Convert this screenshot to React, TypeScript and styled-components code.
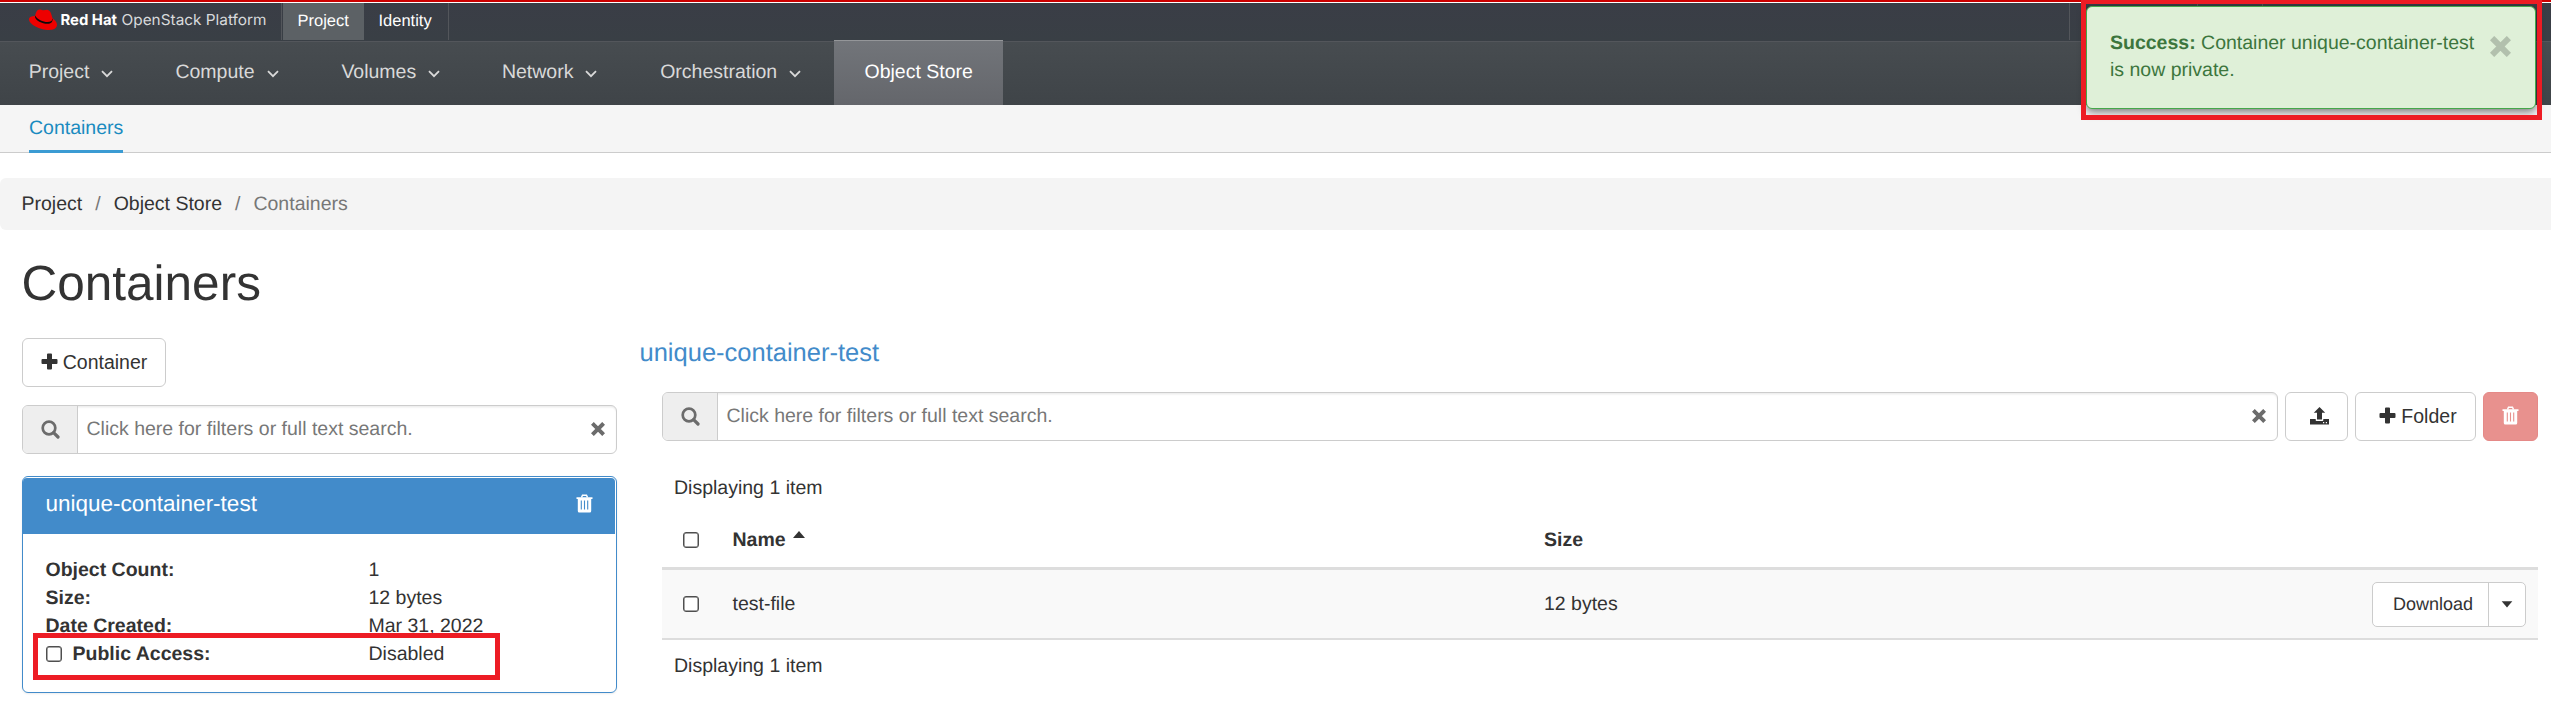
import React from 'react';
import styled, { createGlobalStyle, css } from 'styled-components';

const GlobalStyle = createGlobalStyle`
  * { box-sizing: border-box; }
  html, body { margin: 0; padding: 0; background: #fff; }
  body {
    font-family: "Liberation Sans", Arial, sans-serif;
    font-size: 19.5px;
    line-height: 28px;
    color: #333;
    text-rendering: geometricPrecision;
    overflow: hidden;
  }
`;

const Page = styled.div`
  position: relative;
  width: 2551px;
  height: 704px;
  overflow: hidden;
`;

/* ---------- header ---------- */
const TopBar = styled.header`
  display: flex;
  height: 42px;
  border-top: 2px solid #c00;
  border-bottom: 1px solid #53565b;
  padding-top: 1px;
  background: linear-gradient(#fff 1px, #3a3d46 1px, #393f45);
  font-size: 16.5px;
  line-height: 37px;
  color: #fff;
`;
const Brand = styled.div`
  display: flex;
  align-items: flex-start;
  width: 282px;
  height: 37px;
  padding: 6px 0 0 29px;
  border-right: 1px solid #53565b;
  svg { display: block; }
`;
const TopLink = styled.a<{ $active?: boolean; $w: number }>`
  height: 37px;
  width: ${p => p.$w}px;
  padding-left: 14.5px;
  ${p => p.$active
    ? css`margin-left: 1px; background: #5c6165;`
    : css`border-right: 1px solid #53565b;`}
`;
const UserArea = styled.div`
  display: flex;
  height: 37px;
  width: 482px;
  margin-left: auto;
  border-left: 1px solid #53565b;
`;
const UserCell = styled.div<{ $w: number }>`
  width: ${p => p.$w}px;
  border-right: 1px solid #53565b;
`;

const MainNav = styled.nav`
  display: flex;
  height: 63px;
  background: linear-gradient(#474c50, #3f4448);
  color: #d9d9d9;
`;
const NavItem = styled.a<{ $w: number }>`
  display: flex;
  align-items: flex-start;
  gap: 12px;
  width: ${p => p.$w}px;
  padding: 16px 0 0 28.7px;
  svg { margin-top: 12px; }
`;
const NavActive = styled.a`
  position: relative;
  height: 65px;
  width: 169px;
  margin-top: -2px;
  padding: 17px 0 0 30.5px;
  border-top: 1px solid #949699;
  background: linear-gradient(#72757a, #64666b);
  color: #fff;
`;
const SubNav = styled.nav`
  display: flex;
  height: 48px;
  padding-left: 29px;
  background: #f5f5f5;
  border-bottom: 1px solid #ccc;
`;
const SubTab = styled.a`
  height: 48px;
  width: 94px;
  padding-top: 9px;
  border-bottom: 3px solid #3b9bd3;
  color: #1a8bc0;
`;

/* ---------- body ---------- */
const Crumbs = styled.div`
  display: flex;
  height: 52px;
  margin-top: 25px;
  padding: 12px 0 0 21.5px;
  border-radius: 6px 0 0 6px;
  background: #f4f4f4;
  color: #777;
  b { font-weight: normal; color: #333; }
  i { font-style: normal; padding: 0 13px; }
`;
const Title = styled.h1`
  margin: 27px 0 0 21.5px;
  height: 54px;
  line-height: 54px;
  font-size: 49.5px;
  font-weight: normal;
`;
const Columns = styled.main`
  display: flex;
  padding: 27px 13px 0 22px;
`;
const Left = styled.aside`
  width: 595px;
  flex: none;
`;
const Right = styled.section`
  flex: 1;
  padding-left: 23px;
`;

const Button = styled.button<{ $w: number; $danger?: boolean; $shift?: number }>`
  display: flex;
  align-items: center;
  justify-content: center;
  gap: 5px;
  width: ${p => p.$w}px;
  height: 49px;
  padding: 0 0 2px ${p => p.$shift ?? 0}px;
  flex: none;
  border: 1px solid ${p => (p.$danger ? '#e58987' : '#ccc')};
  border-radius: 6px;
  background: ${p => (p.$danger ? '#e8918e' : '#fff')};
  color: ${p => (p.$danger ? '#fff' : '#333')};
  font: inherit;
`;
const SearchBox = styled.div`
  display: flex;
  flex: 1;
  height: 49px;
  border: 1px solid #ccc;
  border-radius: 6px;
  overflow: hidden;
  background: #fff;
  box-shadow: inset 0 1.5px 1.5px rgba(0, 0, 0, 0.075);
  color: #777;
`;
const Addon = styled.span`
  display: flex;
  align-items: center;
  justify-content: center;
  width: 55px;
  background: #eee;
  border-right: 1px solid #ccc;
`;
const Placeholder = styled.span`
  flex: 1;
  padding: 9px 0 0 8.5px;
`;
const Clear = styled.span`
  padding: 16px 11px 0 0;
  line-height: 0;
`;
const LeftSearch = styled.div`
  display: flex;
  margin-top: 18px;
`;

const Card = styled.div`
  height: 217px;
  margin-top: 22px;
  padding: 1px 1px 0 0;
  border: 1px solid #428bca;
  border-radius: 6px;
  box-shadow: 0 1px 2px rgba(0, 0, 0, 0.08);
`;
const CardHead = styled.div`
  display: flex;
  justify-content: space-between;
  height: 56px;
  padding: 12px 22px 0 22.5px;
  border-radius: 4px 4px 0 0;
  background: #428bca;
  color: #fff;
  font-size: 22.5px;
  svg { margin-top: 4px; }
`;
const Details = styled.dl`
  display: grid;
  grid-template-columns: 323px 1fr;
  grid-auto-rows: 27.86px;
  margin: 0;
  padding: 22px 0 0 22.5px;
`;
const Term = styled.dt`
  display: flex;
  align-items: center;
  gap: 11px;
  font-weight: bold;
`;
const Value = styled.dd`
  margin: 0;
`;
const Check = styled.span`
  display: block;
  width: 16px;
  height: 16px;
  flex: none;
  border: 1px solid #4f4f4f;
  box-shadow: inset 0 0 0 0.5px #4f4f4f;
  border-radius: 3px;
  background: #fff;
`;

const Path = styled.a`
  display: block;
  height: 54px;
  margin-left: -0.5px;
  line-height: 30px;
  font-size: 25.5px;
  color: #428bca;
`;
const Toolbar = styled.div`
  display: flex;
  gap: 7px;
  margin-left: 22px;
`;
const TableWrap = styled.div`
  margin-left: 22px;
  padding-top: 33px;
`;
const Caption = styled.div`
  padding-left: 12px;
  height: 28px;
`;
const Row = styled.div<{ $head?: boolean }>`
  display: grid;
  grid-template-columns: 70.5px 811.5px 1fr auto;
  align-items: center;
  padding-right: 12px;
  ${p => p.$head
    ? css`height: 68px; font-weight: bold; border-bottom: 3px solid #ddd; padding-top: 10px;`
    : css`height: 70px; background: #f9f9f9; border-bottom: 2px solid #ddd;`}
`;
const CheckCell = styled.div`
  padding: 0 0 0 21px;
`;
const SortCell = styled.div`
  display: flex;
  gap: 7px;
  svg { margin-top: 5px; }
`;
const Split = styled.div`
  display: flex;
  width: 154px;
  height: 45px;
  border: 1px solid #ccc;
  border-radius: 5px;
  background: #fff;
  font-size: 18px;
`;
const SplitMain = styled.span`
  width: 116px;
  padding: 7px 0 0 20px;
  border-right: 1px solid #ccc;
`;
const SplitCaret = styled.span`
  flex: 1;
  display: flex;
  align-items: center;
  justify-content: center;
`;
const FootCaption = styled(Caption)`
  margin-top: 11.5px;
`;

/* ---------- overlays ---------- */
const Toast = styled.div`
  position: absolute;
  left: 2086px;
  top: 6px;
  width: 450px;
  height: 103px;
  padding: 22.5px 24px 0 23px;
  display: flex;
  justify-content: space-between;
  border: 1px solid #45a84a;
  border-radius: 6px;
  background: #dff0d8;
  box-shadow: 0 3px 9px rgba(0, 0, 0, 0.5);
  color: #3c763d;
  line-height: 27.4px;
  svg { margin-top: 6px; }
`;
const Highlight = styled.div<{ $x: number; $y: number; $w: number; $h: number }>`
  position: absolute;
  left: ${p => p.$x}px;
  top: ${p => p.$y}px;
  width: ${p => p.$w}px;
  height: ${p => p.$h}px;
  border: 5px solid #ed1c24;
`;

/* ---------- icons ---------- */
const Chevron = () => (
  <svg width="12" height="8" viewBox="0 0 12 8" fill="none" stroke="#d9d9d9" strokeWidth="1.8">
    <path d="M1 1.2 6 6.2 11 1.2" />
  </svg>
);
const Plus = () => (
  <svg width="17" height="17" viewBox="0 0 17 17">
    <path fill="currentColor" d="M7 .5h3a1 1 0 0 1 1 1V6h4.500a1 1 0 0 1 1 1v3a1 1 0 0 1-1 1H11v4.500a1 1 0 0 1-1 1H7a1 1 0 0 1-1-1V11H1.500a1 1 0 0 1-1-1V7a1 1 0 0 1 1-1H6V1.500a1 1 0 0 1 1-1z" />
  </svg>
);
const Cross = ({ size, color }: { size: number; color: string }) => (
  <svg width={size} height={size} viewBox="0 0 14 14">
    <path d="M2.800 2.800 11.200 11.200M11.200 2.800 2.800 11.200" stroke={color} strokeWidth="4" strokeLinecap="square" />
  </svg>
);
const Search = () => (
  <svg width="19" height="19" viewBox="0 0 19 19" fill="none" stroke="#6c6c6c">
    <circle cx="8" cy="8" r="6.300" strokeWidth="2.700" />
    <path d="M12.600 12.600 17 17" strokeWidth="3.200" strokeLinecap="round" />
  </svg>
);
const Trash = ({ inner }: { inner: string }) => (
  <svg width="17" height="19" viewBox="0 0 17 19">
    <path d="M5.500 3.500 6.500 1.300h4l1 2.200" fill="none" stroke="#fff" strokeWidth="1.500" />
    <path fill="#fff" d="M.5 3.300h16v1.700h-1.300V17a1.500 1.500 0 0 1-1.500 1.500H3.300A1.500 1.500 0 0 1 1.800 17V5H.5z" />
    <path d="M5.300 6.500v9M8.500 6.500v9M11.700 6.500v9" stroke={inner} strokeWidth="1.100" />
  </svg>
);
const Upload = () => (
  <svg width="19" height="18" viewBox="0 0 19 18" fill="#333">
    <path d="M9.500 0 15.200 5.800H12V12.500H7V5.800H3.800z" />
    <path d="M0 12h5.700v1.200q0 .8.800.8h6q.8 0 .8-.8V12H19v5.500H0z" />
    <path fill="#fff" d="M13 15h1.200v1.200H13zM15.800 15H17v1.200h-1.200z" />
  </svg>
);
const Caret = ({ up }: { up?: boolean }) => (
  <svg width="12" height="7" viewBox="0 0 12 7" fill="#333">
    <path d={up ? 'M0 7 6 0l6 7z' : 'M.7 .3h10.600L6 6.500z'} />
  </svg>
);
const Logo = () => (
  <svg width="240" height="24" viewBox="0 0 240 24">
    <path fill="#e00" d="M6 7C7 3.500 7.800.500 10.500.500c2 0 2.800.8 4.300.8s2.500-.8 4.200-.3c2.500.8 3.300 3.800 4.500 8.300 2.500 1.800 4.500 4.200 4.500 6.500 0 3.500-3.500 5.200-8 5.200C11 21 0 15.500 0 10.300 0 8 3 7 6 7z" />
    <path fill="#0b0b0b" d="M6.300 6.500C8 10.500 14 13 18.500 13c3 0 4.700-1 4.600-2.700l.4-.8c.5 3.500-1.500 5.300-5 5.300C13 14.800 6.500 11.500 6 8z" />
    <text x="31.500" y="16" fill="#fff" fontFamily="Inter, sans-serif" fontSize="15" fontWeight="700" textLength="56.500" lengthAdjust="spacingAndGlyphs">Red Hat</text>
    <text x="92.500" y="16" fill="#d8dadc" fontFamily="Inter, sans-serif" fontSize="15" fontWeight="400" textLength="145" lengthAdjust="spacingAndGlyphs">OpenStack Platform</text>
  </svg>
);

const SearchField = () => (
  <SearchBox>
    <Addon><Search /></Addon>
    <Placeholder>Click here for filters or full text search.</Placeholder>
    <Clear><Cross size={14} color="#6c6c6c" /></Clear>
  </SearchBox>
);

const menus: [string, number][] = [
  ['Project', 146.7], ['Compute', 166], ['Volumes', 160.5], ['Network', 158.3], ['Orchestration', 202.5],
];
const details = [['Object Count:', '1'], ['Size:', '12 bytes'], ['Date Created:', 'Mar 31, 2022']];

export default function App() {
  return (
    <>
      <GlobalStyle />
      <Page>
        <TopBar>
          <Brand><Logo /></Brand>
          <TopLink $active $w={81}>Project</TopLink>
          <TopLink $w={85}>Identity</TopLink>
          <UserArea>
            <UserCell $w={128} />
            <UserCell $w={65} />
          </UserArea>
        </TopBar>
        <MainNav>
          {menus.map(([name, w]) => (
            <NavItem key={name} $w={w}>{name}<Chevron /></NavItem>
          ))}
          <NavActive>Object Store</NavActive>
        </MainNav>
        <SubNav><SubTab>Containers</SubTab></SubNav>
        <Crumbs><b>Project</b><i>/</i><b>Object Store</b><i>/</i><span>Containers</span></Crumbs>
        <Title>Containers</Title>
        <Columns>
          <Left>
            <Button $w={144}><Plus />Container</Button>
            <LeftSearch><SearchField /></LeftSearch>
            <Card>
              <CardHead>unique-container-test<Trash inner="#428bca" /></CardHead>
              <Details>
                {details.map(([k, v]) => (
                  <React.Fragment key={k}><Term>{k}</Term><Value>{v}</Value></React.Fragment>
                ))}
                <Term><Check />Public Access:</Term><Value>Disabled</Value>
              </Details>
            </Card>
          </Left>
          <Right>
            <Path>unique-container-test</Path>
            <Toolbar>
              <SearchField />
              <Button $w={63} $shift={5}><Upload /></Button>
              <Button $w={121} $shift={5}><Plus />Folder</Button>
              <Button $w={55} $danger><Trash inner="#e8918e" /></Button>
            </Toolbar>
            <TableWrap>
              <Caption>Displaying 1 item</Caption>
              <Row $head>
                <CheckCell><Check /></CheckCell>
                <SortCell>Name<Caret up /></SortCell>
                <div>Size</div>
              </Row>
              <Row>
                <CheckCell><Check /></CheckCell>
                <div>test-file</div>
                <div>12 bytes</div>
                <Split>
                  <SplitMain>Download</SplitMain>
                  <SplitCaret><Caret /></SplitCaret>
                </Split>
              </Row>
              <FootCaption>Displaying 1 item</FootCaption>
            </TableWrap>
          </Right>
        </Columns>
        <Toast>
          <div><strong>Success:</strong> Container unique-container-test<br />is now private.</div>
          <Cross size={21} color="#b2c0ad" />
        </Toast>
        <Highlight $x={2081} $y={-1} $w={461} $h={121} />
        <Highlight $x={33} $y={633} $w={467} $h={47} />
      </Page>
    </>
  );
}
